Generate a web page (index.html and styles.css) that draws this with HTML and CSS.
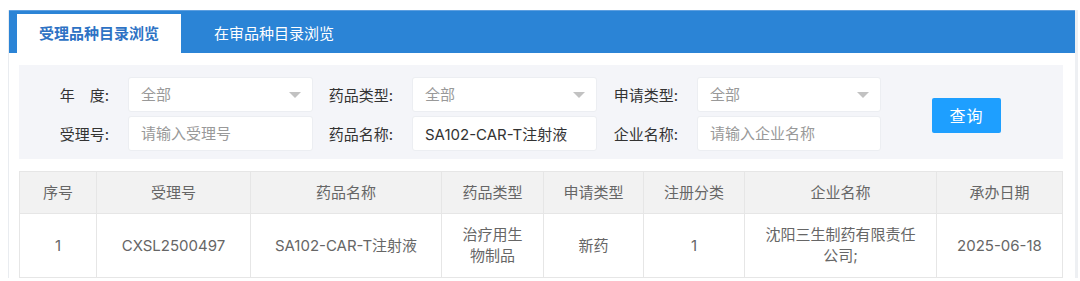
FILE: index.html
```html
<!DOCTYPE html>
<html lang="zh-CN">
<head>
    <meta charset="UTF-8">
    <title>品种目录浏览</title>
    <link rel="stylesheet" href="styles.css">
</head>
<body>

    <div class="box">
        <!-- Tabs -->
        <div class="tab-bar">
            <div class="tab active">受理品种目录浏览</div>
            <div class="tab">在审品种目录浏览</div>
        </div>

        <div class="content">
            <!-- Search -->
            <div class="search">
                <div class="fields">
                    <label class="label">年&emsp;度:</label>
                    <div class="select"><span class="val">全部</span><i class="arrow"></i></div>
                    <label class="label">药品类型:</label>
                    <div class="select"><span class="val">全部</span><i class="arrow"></i></div>
                    <label class="label">申请类型:</label>
                    <div class="select"><span class="val">全部</span><i class="arrow"></i></div>

                    <label class="label">受理号:</label>
                    <input class="input" type="text" placeholder="请输入受理号">
                    <label class="label">药品名称:</label>
                    <input class="input" type="text" value="SA102-CAR-T注射液">
                    <label class="label">企业名称:</label>
                    <input class="input" type="text" placeholder="请输入企业名称">
                </div>
                <button class="btn">查询</button>
            </div>

            <!-- Result table -->
            <table class="list">
                <colgroup>
                    <col style="width:77px">
                    <col style="width:154px">
                    <col style="width:191px">
                    <col style="width:102px">
                    <col style="width:100px">
                    <col style="width:101px">
                    <col style="width:192px">
                    <col style="width:126px">
                </colgroup>
                <thead>
                    <tr>
                        <th>序号</th>
                        <th>受理号</th>
                        <th>药品名称</th>
                        <th>药品类型</th>
                        <th>申请类型</th>
                        <th>注册分类</th>
                        <th>企业名称</th>
                        <th>承办日期</th>
                    </tr>
                </thead>
                <tbody>
                    <tr>
                        <td>1</td>
                        <td>CXSL2500497</td>
                        <td>SA102-CAR-T注射液</td>
                        <td>治疗用生物制品</td>
                        <td>新药</td>
                        <td>1</td>
                        <td>沈阳三生制药有限责任公司;</td>
                        <td>2025-06-18</td>
                    </tr>
                </tbody>
            </table>
        </div>
    </div>

</body>
</html>
```

FILE: styles.css
```css
body {
    margin: 0;
    background: #fff;
    font-family: Inter, "Noto Sans CJK SC", sans-serif;
    font-size: 15px;
    color: #333;
}

.box {
    margin: 10px 0 0 8px;
    width: 1066px;
    border-left: 1px solid #e9ecf0;
    border-right: 3px solid #eef0f3;
    background: #fff;
}

.tab-bar {
    display: flex;
    align-items: flex-end;
    height: 43px;
    padding-left: 8px;
    background: #2b84d6;
    border-top: 1px solid #5d9fe0;
    box-sizing: border-box;
}
.tab {
    height: 39px;
    line-height: 39px;
    padding: 0 22px;
    color: #fff;
    cursor: pointer;
}
.tab + .tab {
    margin-left: 11px;
}
.tab.active {
    background: #fff;
    color: #2d72c4;
    font-weight: 600;
}

.content {
    padding: 12px 12px 0 10px;
}

.search {
    display: flex;
    align-items: center;
    padding: 12px 0 8px 10px;
    background: #f4f5f9;
}
.fields {
    display: grid;
    grid-template-columns: 99px 185px 99px 185px 100px 184px;
    row-gap: 4px;
    align-items: center;
}
.label {
    text-align: right;
    padding-right: 19px;
    color: #333;
    white-space: nowrap;
}
.select,
.input {
    position: relative;
    box-sizing: border-box;
    height: 35px;
    padding: 0 12px;
    border: 1px solid #eceef2;
    border-radius: 3px;
    background: #fff;
    font: inherit;
    line-height: 33px;
    color: #333;
    outline: none;
}
.select .val {
    color: #999;
}
.input::placeholder {
    color: #999;
}
.arrow {
    position: absolute;
    right: 11px;
    top: 14px;
    width: 0;
    height: 0;
    border-left: 6px solid transparent;
    border-right: 6px solid transparent;
    border-top: 6px solid #c2c2c2;
}

.btn {
    margin-left: 51px;
    margin-top: 2px;
    width: 69px;
    height: 35px;
    border: none;
    border-radius: 2px;
    background: #1e9fff;
    color: #fff;
    font: inherit;
    font-size: 16px;
    letter-spacing: 1px;
    cursor: pointer;
}

.list {
    margin-top: 12px;
    width: 1043px;
    table-layout: fixed;
    border-collapse: collapse;
    color: #666;
}
.list th,
.list td {
    border: 1px solid #e6e6e6;
    padding: 10px 15px;
    line-height: 21px;
    text-align: center;
    font-weight: normal;
}
.list th {
    background: #f2f2f2;
}
.list td {
    padding: 10px 15px 11px;
}
```
